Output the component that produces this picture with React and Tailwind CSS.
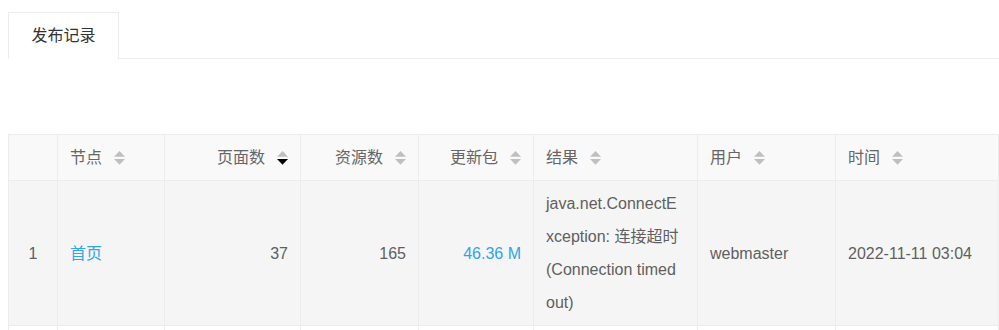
import React from "react";

function SortIcon({ active }) {
  return (
    <svg width="11" height="14" viewBox="0 0 11 14" className="ml-3 inline-block shrink-0 align-middle">
      <path d="M5.5 0 L11 5.8 L0 5.8 Z" fill="#bfbfbf" />
      <path d="M0 8 L11 8 L5.5 13.8 Z" fill={active ? "#000000" : "#bfbfbf"} />
    </svg>
  );
}

const cols = [
  { label: "", w: "w-[49px]", align: "center" },
  { label: "节点", w: "w-[107px]", align: "left" },
  { label: "页面数", w: "w-[136px]", align: "right", active: true },
  { label: "资源数", w: "w-[118px]", align: "right" },
  { label: "更新包", w: "w-[115px]", align: "right" },
  { label: "结果", w: "w-[164px]", align: "left" },
  { label: "用户", w: "w-[138px]", align: "left" },
  { label: "时间", w: "w-[163px]", align: "left" },
];

const td = "border border-[#ececec] px-3 py-[6px]";

export default function App() {
  return (
    <div
      className="h-[330px] overflow-hidden bg-white text-[16px] text-[#5f5f5f]"
      style={{ fontFamily: '"Liberation Sans", "Noto Sans CJK SC", sans-serif' }}
    >
      <div className="pt-3 pl-2">
        <div className="flex border-b border-[#ececec]">
          <div className="-mb-px flex h-[47px] w-[111px] items-center justify-center border border-b-0 border-[#ececec] bg-white text-[#333333]">
            发布记录
          </div>
        </div>
      </div>

      <div className="mt-[75px] pl-2">
        <table className="w-[990px] table-fixed border-collapse">
          <colgroup>
            {cols.map((c, i) => (
              <col key={i} className={c.w} />
            ))}
          </colgroup>
          <thead>
            <tr className="bg-[#f9f9f9]">
              {cols.map((c, i) => (
                <th
                  key={i}
                  className={
                    "h-[46px] border border-[#ececec] px-3 py-0 font-normal leading-6 text-[#666666] " +
                    (c.align === "right" ? "text-right" : c.align === "center" ? "text-center" : "text-left")
                  }
                >
                  {c.label && (
                    <span className="inline-flex items-center align-middle">
                      {c.label}
                      <SortIcon active={c.active} />
                    </span>
                  )}
                </th>
              ))}
            </tr>
          </thead>
          <tbody>
            <tr className="bg-[#f5f5f5] leading-[33px]">
              <td className={td + " text-center"}>1</td>
              <td className={td + " text-[#2ea6e8]"}>首页</td>
              <td className={td + " text-right"}>37</td>
              <td className={td + " text-right"}>165</td>
              <td className={td + " text-right text-[#2ea6e8]"}>46.36 M</td>
              <td className={td + " break-all pr-4"}>
                java.net.ConnectException: 连接超时 (Connection timed out)
              </td>
              <td className={td}>webmaster</td>
              <td className={td}>2022-11-11 03:04</td>
            </tr>
            <tr className="h-[46px] bg-white">
              {cols.map((c, i) => (
                <td key={i} className={td}></td>
              ))}
            </tr>
          </tbody>
        </table>
      </div>
    </div>
  );
}
